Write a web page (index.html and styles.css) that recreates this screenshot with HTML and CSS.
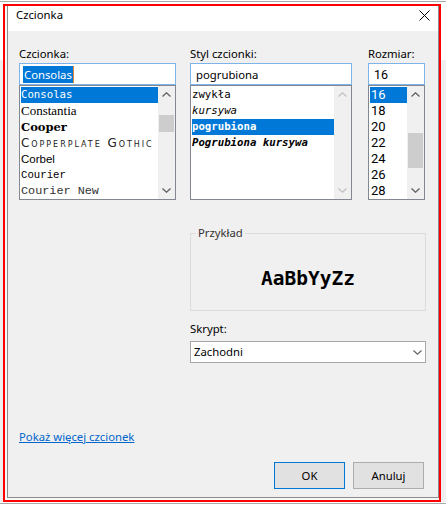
FILE: index.html
```html
<!DOCTYPE html>
<html lang="pl">
<head>
<meta charset="utf-8">
<title>Czcionka</title>
<link rel="stylesheet" href="styles.css">
</head>
<body>
<div class="outline">
  <div class="window">
    <div class="titlebar">
      <span class="title">Czcionka</span>
      <svg class="close" width="11" height="11" viewBox="0 0 11 11"><path d="M0.5 0.5 L10.5 10.5 M10.5 0.5 L0.5 10.5" stroke="#000" stroke-width="1" fill="none"/></svg>
    </div>
    <div class="content">
      <div class="pickers">
        <div class="col col-font">
          <div class="label">Czcionka:</div>
          <div class="input"><span class="sel">Consolas</span></div>
          <div class="list">
            <div class="items">
              <div class="item selected f-consolas">Consolas</div>
              <div class="item f-constantia">Constantia</div>
              <div class="item f-cooper">Cooper</div>
              <div class="item f-copper">Copperplate Gothic</div>
              <div class="item f-corbel">Corbel</div>
              <div class="item f-courier">Courier</div>
              <div class="item f-couriernew">Courier New</div>
            </div>
            <div class="sb">
              <div class="sb-btn"><svg width="9" height="5" viewBox="0 0 9 5"><path d="M0.5 4.5 L4.5 0.8 L8.5 4.5" stroke="#606060" stroke-width="1.3" fill="none"/></svg></div>
              <div class="sb-track"><div class="thumb thumb-font"></div></div>
              <div class="sb-btn"><svg width="9" height="5" viewBox="0 0 9 5"><path d="M0.5 0.5 L4.5 4.2 L8.5 0.5" stroke="#606060" stroke-width="1.3" fill="none"/></svg></div>
            </div>
          </div>
        </div>
        <div class="col col-style">
          <div class="label">Styl czcionki:</div>
          <div class="input"><span class="plain">pogrubiona</span></div>
          <div class="list">
            <div class="items">
              <div class="item s-mono">zwykła</div>
              <div class="item s-mono s-italic">kursywa</div>
              <div class="item selected s-mono s-bold">pogrubiona</div>
              <div class="item s-mono s-bold s-italic">Pogrubiona kursywa</div>
            </div>
            <div class="sb">
              <div class="sb-btn"><svg width="9" height="5" viewBox="0 0 9 5"><path d="M0.5 4.5 L4.5 0.8 L8.5 4.5" stroke="#c2c2c2" stroke-width="1.3" fill="none"/></svg></div>
              <div class="sb-track"></div>
              <div class="sb-btn"><svg width="9" height="5" viewBox="0 0 9 5"><path d="M0.5 0.5 L4.5 4.2 L8.5 0.5" stroke="#c2c2c2" stroke-width="1.3" fill="none"/></svg></div>
            </div>
          </div>
        </div>
        <div class="col col-size">
          <div class="label">Rozmiar:</div>
          <div class="input"><span class="plain n-input">16</span></div>
          <div class="list">
            <div class="items">
              <div class="item selected n-size">16</div>
              <div class="item n-size">18</div>
              <div class="item n-size">20</div>
              <div class="item n-size">22</div>
              <div class="item n-size">24</div>
              <div class="item n-size">26</div>
              <div class="item n-size">28</div>
            </div>
            <div class="sb">
              <div class="sb-btn"><svg width="9" height="5" viewBox="0 0 9 5"><path d="M0.5 4.5 L4.5 0.8 L8.5 4.5" stroke="#606060" stroke-width="1.3" fill="none"/></svg></div>
              <div class="sb-track"><div class="thumb thumb-size"></div></div>
              <div class="sb-btn"><svg width="9" height="5" viewBox="0 0 9 5"><path d="M0.5 0.5 L4.5 4.2 L8.5 0.5" stroke="#606060" stroke-width="1.3" fill="none"/></svg></div>
            </div>
          </div>
        </div>
      </div>

      <div class="lower">
        <div class="group">
          <span class="group-title">Przykład</span>
          <div class="sample">AaBbYyZz</div>
        </div>
        <div class="label script-label">Skrypt:</div>
        <div class="select">
          <span>Zachodni</span>
          <svg width="9" height="5" viewBox="0 0 9 5"><path d="M0.5 0.5 L4.5 4.2 L8.5 0.5" stroke="#606060" stroke-width="1.1" fill="none"/></svg>
        </div>
      </div>

      <a class="link" href="#">Pokaż więcej czcionek</a>

      <div class="buttons">
        <button class="btn default">OK</button>
        <button class="btn">Anuluj</button>
      </div>
    </div>
  </div>
</div>
</body>
</html>
```
FILE: styles.css
```css
* {
  box-sizing: border-box;
}

html {
  background: linear-gradient(to bottom, #ffffff 0, #ffffff 1px, #a8a8a8 1px, #a8a8a8 2px, #ffffff 2px, #ffffff 60px, #efefef 60px);
}

body {
  margin: 0;
  padding: 4px 0 0 3px;
  font-family: "Noto Sans", "Open Sans", sans-serif;
  font-size: 11.3px;
  line-height: 16px;
  color: #000;
}

.outline {
  width: 438px;
  height: 498px;
  border: 2px solid #ff0000;
  padding: 0 1px 2px 2px;
  background: #f7f7f7;
  display: flex;
}

.window {
  flex: 1;
  display: flex;
  flex-direction: column;
  border: 1px solid #8c8c8c;
  border-top: 0;
  background: #f0f0f0;
}

.titlebar {
  height: 25px;
  background: #ffffff;
  display: flex;
  justify-content: space-between;
  align-items: flex-start;
  padding: 1px 8px 0 8px;
}

.title {
  line-height: 16px;
}

.close {
  margin-top: 3px;
  display: block;
}

.content {
  flex: 1;
  display: flex;
  flex-direction: column;
  padding: 15px 12px 8px 11px;
}

.pickers {
  display: flex;
}

.col-font {
  width: 157px;
  margin-right: 14px;
}

.col-style {
  width: 162px;
  margin-right: 16px;
}

.col-size {
  width: 57px;
}

.label {
  height: 16px;
  line-height: 16px;
  margin-bottom: 1px;
  white-space: nowrap;
}

.input {
  height: 22px;
  border: 1px solid #7eb4ea;
  background: #ffffff;
  padding: 0 3px;
  display: flex;
  align-items: center;
}

.sel {
  background: #0078d7;
  color: #ffffff;
  line-height: 17px;
  padding: 0 1px;
  border-right: 1px solid #e08a3a;
}

.plain {
  padding-left: 2px;
  line-height: 17px;
}

.n-input {
  font-family: Roboto, "Noto Sans", sans-serif;
  font-size: 12.5px;
}

.list {
  height: 115px;
  border: 1px solid #828790;
  background: #ffffff;
  display: flex;
}

.items {
  flex: 1;
  min-width: 0;
  padding: 1px 0 0 1px;
}

.item {
  height: 16px;
  line-height: 16px;
  white-space: nowrap;
  overflow: hidden;
}

.item.selected {
  background: #0078d7;
  color: #ffffff;
}

.f-consolas {
  font-family: "DejaVu Sans Mono", monospace;
  font-size: 10.7px;
}

.f-constantia {
  font-family: "Liberation Serif", serif;
  font-size: 13px;
}

.f-cooper {
  font-family: "DejaVu Serif", serif;
  font-weight: 900;
  font-size: 11.5px;
}

.f-copper {
  font-family: "DejaVu Sans", sans-serif;
  font-variant: small-caps;
  font-size: 12px;
  letter-spacing: 1.95px;
  color: #222;
}

.f-corbel {
  font-family: "Liberation Sans", sans-serif;
  font-size: 11.5px;
}

.f-courier {
  font-family: "Liberation Mono", monospace;
  font-size: 10.7px;
}

.f-couriernew {
  font-family: "Liberation Mono", monospace;
  font-size: 11.8px;
  color: #333;
}

.s-mono {
  font-family: "DejaVu Sans Mono", monospace;
  font-size: 10.7px;
}

.s-italic {
  font-style: italic;
}

.s-bold {
  font-weight: bold;
}

.n-size {
  font-family: Roboto, "Noto Sans", sans-serif;
  font-size: 13px;
  padding-left: 1px;
}

.sb {
  width: 17px;
  flex: none;
  display: flex;
  flex-direction: column;
  background: #f0f0f0;
}

.sb-btn {
  height: 17px;
  display: flex;
  align-items: center;
  justify-content: center;
}

.sb-btn svg {
  display: block;
}

.sb-track {
  flex: 1;
}

.thumb {
  margin: 0 1px;
  background: #cdcdcd;
}

.thumb-font {
  margin-top: 12px;
  height: 17px;
}

.thumb-size {
  margin-top: 30px;
  height: 35px;
}

.lower {
  margin: 33px 0 0 171px;
  width: 236px;
}

.group {
  height: 78px;
  border: 1px solid #dcdcdc;
}

.group-title {
  display: block;
  width: max-content;
  margin: -9px 0 0 5px;
  padding: 0 2px;
  background: #f0f0f0;
  color: #333;
  line-height: 16px;
}

.sample {
  margin-top: 26px;
  text-align: center;
  font-family: "DejaVu Sans Mono", monospace;
  font-weight: bold;
  font-size: 19.5px;
  line-height: 24px;
}

.script-label {
  margin-top: 10px;
  margin-bottom: 0;
}

.select {
  margin-top: 4px;
  height: 22px;
  border: 1px solid #a6a6a6;
  background: #ffffff;
  display: flex;
  align-items: center;
  justify-content: space-between;
  padding: 0 3px;
}

.select svg {
  display: block;
}

.link {
  margin-top: 66px;
  align-self: flex-start;
  color: #0066cc;
  text-decoration: underline;
  line-height: 16px;
}

.buttons {
  margin: 17px 2px 0 0;
  display: flex;
  justify-content: flex-end;
  gap: 8px;
}

.btn {
  width: 71px;
  height: 27px;
  border: 1px solid #adadad;
  background: #e1e1e1;
  font-family: inherit;
  font-size: 11.3px;
  color: #000;
  padding: 0;
}

.btn.default {
  border-color: #0078d7;
}
```
